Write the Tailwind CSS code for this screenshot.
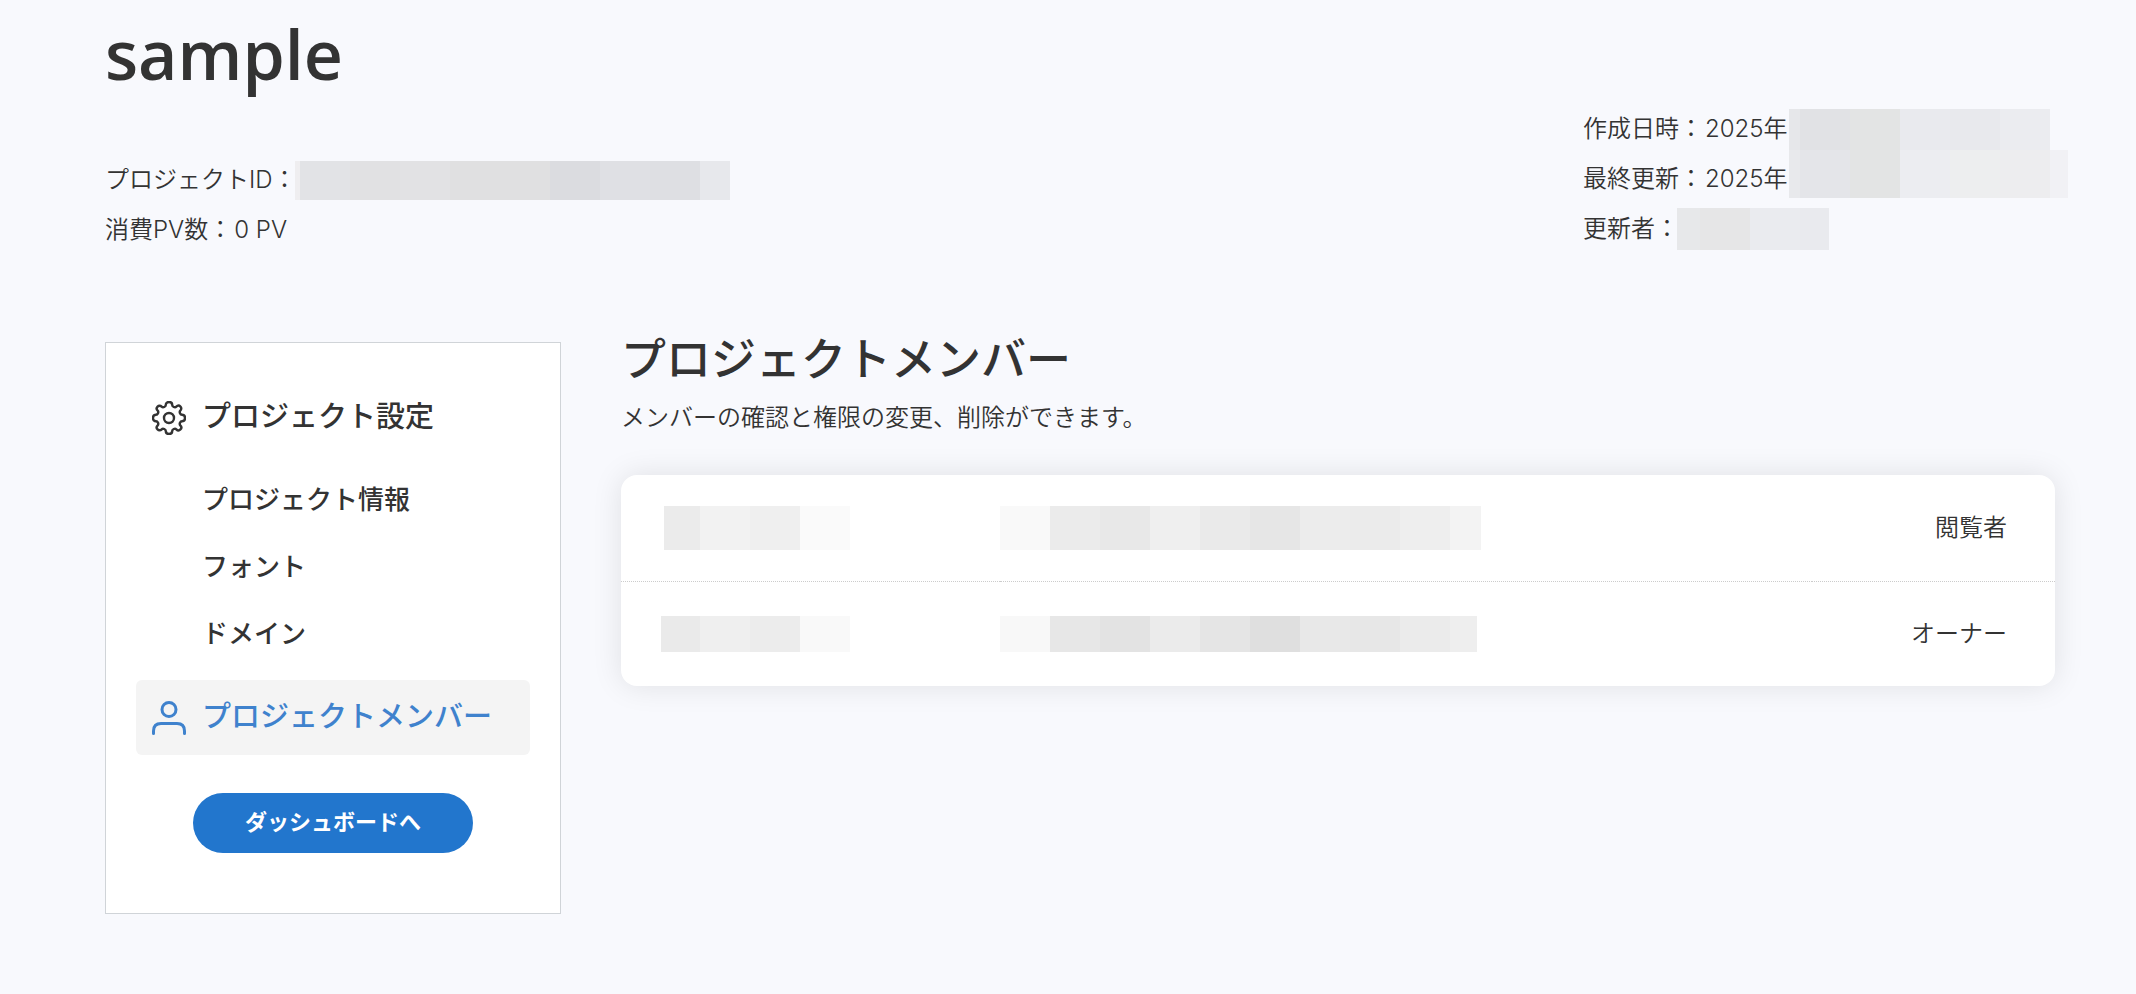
<!DOCTYPE html>
<html lang="ja">
  <head>
    <meta charset="UTF-8" />
    <meta name="viewport" content="width=device-width, initial-scale=1.0" />
    <title>sample</title>
    <script src="https://cdn.jsdelivr.net/npm/@tailwindcss/browser@4"></script>
  </head>
  <body
    class="min-h-screen bg-[#f8f9fd] font-['Inter','Noto_Sans_CJK_JP',sans-serif] text-2xl font-[350] text-[#333]"
  >
    <!-- Project header -->
    <header class="flex justify-between pt-2 pr-[68px] pl-[105px] whitespace-nowrap">
      <div>
        <h1 class="font-['Open_Sans',sans-serif] text-[68px] leading-[92px] font-semibold">sample</h1>
        <dl class="mt-[55px]">
          <div class="flex h-[50px] items-center">
            <dt class="w-[190px]">プロジェクトID：</dt>
            <dd class="flex h-[39px]">
              <span class="w-[5px] bg-[#efeef0]"></span>
              <span class="w-[50px] bg-[#e2e3e6]"></span>
              <span class="w-[50px] bg-[#e1e1e3]"></span>
              <span class="w-[50px] bg-[#e2e2e4]"></span>
              <span class="w-[50px] bg-[#e0e0e1]"></span>
              <span class="w-[50px] bg-[#e0e0e1]"></span>
              <span class="w-[50px] bg-[#dbdce0]"></span>
              <span class="w-[50px] bg-[#dfe0e4]"></span>
              <span class="w-[50px] bg-[#dedfe3]"></span>
              <span class="w-[30px] bg-[#e7e8ec]"></span>
            </dd>
          </div>
          <div class="flex h-[50px] items-center gap-0.5">
            <dt>消費PV数：</dt>
            <dd>0 PV</dd>
          </div>
        </dl>
      </div>

      <div class="mt-24 w-[485px]">
        <div class="flex justify-between">
          <dl class="min-w-0">
            <div class="flex h-[50px] items-center gap-0.5">
              <dt>作成日時：</dt>
              <dd>2025年</dd>
            </div>
            <div class="flex h-[50px] items-center gap-0.5">
              <dt>最終更新：</dt>
              <dd>2025年</dd>
            </div>
          </dl>
          <div class="w-[279px] shrink-0 pt-[5px]">
            <div class="flex h-[41px]">
              <span class="w-[11px] bg-[#e6e7ea]"></span>
              <span class="w-[50px] bg-[#e1e2e5]"></span>
              <span class="w-[50px] bg-[#e3e4e4]"></span>
              <span class="w-[50px] bg-[#e9eaee]"></span>
              <span class="w-[50px] bg-[#e8e9ed]"></span>
              <span class="w-[50px] bg-[#ebecf0]"></span>
            </div>
            <div class="flex h-12">
              <span class="w-[11px] bg-[#e8e9ec]"></span>
              <span class="w-[50px] bg-[#e4e5e9]"></span>
              <span class="w-[50px] bg-[#e3e4e4]"></span>
              <span class="w-[50px] bg-[#ecedf1]"></span>
              <span class="w-[50px] bg-[#edeeef]"></span>
              <span class="w-[50px] bg-[#ededef]"></span>
              <span class="w-[18px] bg-[#f1f1f5]"></span>
            </div>
          </div>
        </div>
        <dl class="flex h-[50px] items-center">
          <dt class="w-[94px]">更新者：</dt>
          <dd class="flex h-[42px]">
            <span class="w-[23px] bg-[#e7e8ea]"></span>
            <span class="w-[50px] bg-[#e6e6e7]"></span>
            <span class="w-[50px] bg-[#eaebef]"></span>
            <span class="w-[29px] bg-[#e9eaee]"></span>
          </dd>
        </dl>
      </div>
    </header>

    <main class="mt-[87px] flex items-start gap-[60px] pr-[81px] pb-20 pl-[105px]">
      <!-- Sidebar -->
      <aside class="w-[456px] shrink-0 border border-[#d0d4d8] bg-white px-[30px] pt-[37px] pb-[60px] font-medium">
        <nav>
          <a href="#settings" class="flex h-[75px] items-center gap-4 px-4 text-[29px]">
            <svg class="size-[34px]" viewBox="0 0 34 34" fill="none" stroke="currentColor" stroke-width="2.4" stroke-linejoin="round">
              <circle cx="17" cy="17" r="5" />
              <path
                d="M17 1C19 1 20.200 2.200 20.200 4C20.200 5.800 23 7 24.300 5.700C25.600 4.400 27.300 4.400 28.450 5.550C29.600 6.700 29.600 8.400 28.300 9.700C27 11 28.200 13.800 30 13.800C31.800 13.800 33 15 33 17C33 19 31.800 20.200 30 20.200C28.200 20.200 27 23 28.300 24.300C29.600 25.600 29.600 27.300 28.450 28.450C27.300 29.600 25.600 29.600 24.300 28.300C23 27 20.200 28.200 20.200 30C20.200 31.800 19 33 17 33C15 33 13.800 31.800 13.800 30C13.800 28.200 11 27 9.700 28.300C8.400 29.600 6.700 29.600 5.550 28.450C4.400 27.300 4.400 25.600 5.700 24.300C7 23 5.800 20.200 4 20.200C2.200 20.200 1 19 1 17C1 15 2.200 13.800 4 13.800C5.800 13.800 7 11 5.700 9.700C4.400 8.400 4.400 6.700 5.550 5.550C6.700 4.400 8.400 4.400 9.700 5.700C11 7 13.800 5.800 13.800 4C13.800 2.200 15 1 17 1Z"
              />
            </svg>
            プロジェクト設定
          </a>
          <ul class="my-3 pl-[66px] text-[26px]">
            <li><a href="#info" class="flex h-[67px] items-center">プロジェクト情報</a></li>
            <li><a href="#font" class="flex h-[67px] items-center">フォント</a></li>
            <li><a href="#domain" class="flex h-[67px] items-center">ドメイン</a></li>
          </ul>
          <a
            href="#members"
            aria-current="page"
            class="flex h-[75px] items-center gap-4 rounded-md bg-[#f4f4f4] px-4 text-[29px] text-[#3f82cd]"
          >
            <svg class="size-[34px]" viewBox="0 0 34 34" fill="none" stroke="currentColor" stroke-width="3" stroke-linecap="round">
              <circle cx="17" cy="8.500" r="7" />
              <path d="M1.500 32.500V30Q1.500 22.500 9 22.500H25Q32.500 22.500 32.500 30V32.500" />
            </svg>
            プロジェクトメンバー
          </a>
        </nav>
        <a
          href="#dashboard"
          class="mx-auto mt-[38px] flex h-[60px] w-[280px] items-center justify-center rounded-full bg-[#2276cd] text-[22px] font-bold text-white"
        >
          ダッシュボードへ
        </a>
      </aside>

      <!-- Member list -->
      <section class="min-w-0 flex-1">
        <h2 class="text-[45px] leading-9 font-medium">プロジェクトメンバー</h2>
        <p class="mt-5 leading-10">メンバーの確認と権限の変更、削除ができます。</p>
        <div class="mt-[37px] rounded-2xl bg-white shadow-[0_0_30px_rgba(0,0,0,0.1)]">
          <table class="w-full">
            <tbody>
              <tr class="h-[106px] border-b border-dotted border-[#ccc]">
                <td class="w-[379px]">
                  <div class="flex h-11 w-[229px] justify-end">
                    <span class="w-9 bg-[#ebebeb]"></span>
                    <span class="w-[50px] bg-[#f2f2f2]"></span>
                    <span class="w-[50px] bg-[#efefef]"></span>
                    <span class="w-[50px] bg-[#fafafa]"></span>
                  </div>
                </td>
                <td>
                  <div class="flex h-11">
                    <span class="w-[50px] bg-[#f9f9f9]"></span>
                    <span class="w-[50px] bg-[#ebebeb]"></span>
                    <span class="w-[50px] bg-[#e8e8e8]"></span>
                    <span class="w-[50px] bg-[#efefef]"></span>
                    <span class="w-[50px] bg-[#eaeaea]"></span>
                    <span class="w-[50px] bg-[#e6e6e6]"></span>
                    <span class="w-[50px] bg-[#ececec]"></span>
                    <span class="w-[50px] bg-[#ebebeb]"></span>
                    <span class="w-[50px] bg-[#eeeeee]"></span>
                    <span class="w-[31px] bg-[#f3f3f3]"></span>
                  </div>
                </td>
                <td class="pr-12 text-right">閲覧者</td>
              </tr>
              <tr class="h-[105px]">
                <td>
                  <div class="flex h-9 w-[229px] justify-end">
                    <span class="w-[39px] bg-[#eaeaea]"></span>
                    <span class="w-[50px] bg-[#efefef]"></span>
                    <span class="w-[50px] bg-[#ececec]"></span>
                    <span class="w-[50px] bg-[#f9f9f9]"></span>
                  </div>
                </td>
                <td>
                  <div class="flex h-9">
                    <span class="w-[50px] bg-[#f8f8f8]"></span>
                    <span class="w-[50px] bg-[#e7e7e7]"></span>
                    <span class="w-[50px] bg-[#e3e3e3]"></span>
                    <span class="w-[50px] bg-[#ebebeb]"></span>
                    <span class="w-[50px] bg-[#e5e5e5]"></span>
                    <span class="w-[50px] bg-[#dfdfdf]"></span>
                    <span class="w-[50px] bg-[#e8e8e8]"></span>
                    <span class="w-[50px] bg-[#e7e7e7]"></span>
                    <span class="w-[50px] bg-[#ebebeb]"></span>
                    <span class="w-[27px] bg-[#eeeeee]"></span>
                  </div>
                </td>
                <td class="pr-12 text-right">オーナー</td>
              </tr>
            </tbody>
          </table>
        </div>
      </section>
    </main>
  </body>
</html>
